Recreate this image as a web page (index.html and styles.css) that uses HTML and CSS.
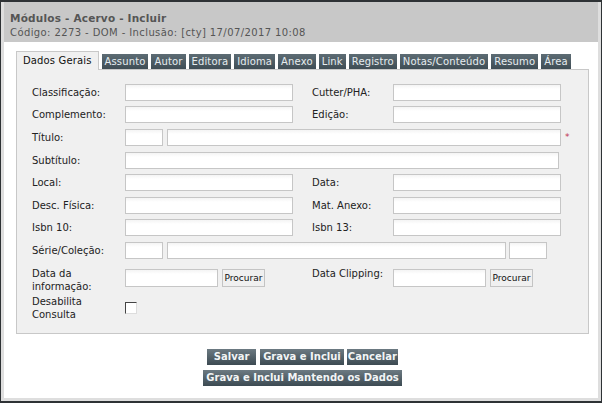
FILE: index.html
```html
<!DOCTYPE html>
<html lang="pt">
<head>
<meta charset="utf-8">
<title>Módulos - Acervo - Incluir</title>
<link rel="stylesheet" href="styles.css">
</head>
<body>
<div class="frame">
  <div class="window">
    <div class="header">
      <div class="title">Módulos - Acervo - Incluir</div>
      <div class="subtitle">Código: 2273 - DOM - Inclusão: [cty] 17/07/2017 10:08</div>
    </div>
    <div class="content">
      <div class="tabs">
        <span class="tab active">Dados Gerais</span>
        <span class="tab">Assunto</span>
        <span class="tab">Autor</span>
        <span class="tab">Editora</span>
        <span class="tab">Idioma</span>
        <span class="tab">Anexo</span>
        <span class="tab">Link</span>
        <span class="tab">Registro</span>
        <span class="tab">Notas/Conteúdo</span>
        <span class="tab">Resumo</span>
        <span class="tab">Área</span>
      </div>
      <div class="panel">
        <div class="row">
          <label class="lbl">Classificação:</label><input class="in half" type="text">
          <label class="lbl rlbl">Cutter/PHA:</label><input class="in rhalf" type="text">
        </div>
        <div class="row">
          <label class="lbl">Complemento:</label><input class="in half" type="text">
          <label class="lbl rlbl">Edição:</label><input class="in rhalf" type="text">
        </div>
        <div class="row">
          <label class="lbl">Título:</label><input class="in small" type="text"><input class="in title-in" type="text"><span class="req">*</span>
        </div>
        <div class="row">
          <label class="lbl">Subtítulo:</label><input class="in full" type="text">
        </div>
        <div class="row">
          <label class="lbl">Local:</label><input class="in half" type="text">
          <label class="lbl rlbl">Data:</label><input class="in rhalf" type="text">
        </div>
        <div class="row">
          <label class="lbl">Desc. Física:</label><input class="in half" type="text">
          <label class="lbl rlbl">Mat. Anexo:</label><input class="in rhalf" type="text">
        </div>
        <div class="row">
          <label class="lbl">Isbn 10:</label><input class="in half" type="text">
          <label class="lbl rlbl">Isbn 13:</label><input class="in rhalf" type="text">
        </div>
        <div class="row">
          <label class="lbl">Série/Coleção:</label><input class="in small" type="text"><input class="in serie" type="text"><input class="in small2" type="text">
        </div>
        <div class="row row-top">
          <label class="lbl two">Data da<br>informação:</label><input class="in date" type="text"><button class="find">Procurar</button>
          <label class="lbl rlbl two clip">Data Clipping:</label><input class="in date" type="text"><button class="find">Procurar</button>
        </div>
        <div class="row row-check">
          <label class="lbl two">Desabilita<br>Consulta</label><span class="check"></span>
        </div>
      </div>
      <div class="actions">
        <div class="btnrow">
          <button class="btn btn-save">Salvar</button>
          <button class="btn">Grava e Inclui</button>
          <button class="btn btn-cancel">Cancelar</button>
        </div>
        <div class="btnrow">
          <button class="btn">Grava e Inclui Mantendo os Dados</button>
        </div>
      </div>
    </div>
  </div>
</div>
</body>
</html>
```

FILE: styles.css
```css
html, body {
  margin: 0;
  padding: 0;
}
body {
  width: 602px;
  height: 403px;
  background: #2e3235;
  font-family: "DejaVu Sans", Verdana, sans-serif;
  font-size: 10px;
  color: #222;
  overflow: hidden;
}
.frame {
  box-sizing: border-box;
  width: 602px;
  height: 403px;
  padding: 2px 1px 2px 1px;
}
.window {
  box-sizing: border-box;
  height: 399px;
  background: #fff;
  border-left: 3px solid #dedede;
  border-right: 3px solid #dedede;
  border-bottom: 3px solid #dedede;
  display: flex;
  flex-direction: column;
}
.header {
  background: #c8c8c8;
  height: 40px;
  padding: 9px 0 0 6px;
  box-sizing: border-box;
  color: #555;
}
.title {
  font-weight: bold;
  font-size: 10.5px;
  line-height: 14px;
  letter-spacing: 0.2px;
}
.subtitle {
  font-size: 10px;
  line-height: 16px;
  letter-spacing: 0.4px;
}
.content {
  padding: 9px 0 0 12px;
}
.tabs {
  display: flex;
  align-items: flex-end;
  gap: 3px;
  height: 18px;
}
.tab {
  box-sizing: border-box;
  height: 15px;
  line-height: 15px;
  padding: 0 3px;
  color: #e6ecef;
  background: linear-gradient(#5d6c74, #3f4d55);
  font-size: 10px;
  letter-spacing: 0.14px;
}
.tab.active {
  height: 19px;
  line-height: 18px;
  background: #f0f0f0;
  color: #111;
  padding: 0 6px;
  border: 1px solid #c8c8c8;
  border-bottom: none;
  margin-bottom: -1px;
  position: relative;
  z-index: 1;
}
.panel {
  box-sizing: border-box;
  width: 573px;
  height: 265px;
  background: #f0f0f0;
  border: 1px solid #c8c8c8;
  padding: 11px 0 0 15px;
}
.row {
  display: flex;
  align-items: center;
  height: 22.6px;
}
.lbl {
  width: 93px;
  flex: none;
  color: #222;
}
.rlbl {
  width: 81px;
  margin-left: 19px;
}
.in {
  box-sizing: border-box;
  height: 17px;
  border: 1px solid #c6c6c6;
  background: linear-gradient(#f4f4f4, #fff 4px);
  margin: 0;
  padding: 0;
  flex: none;
}
.half { width: 168px; }
.rhalf { width: 168px; }
.small { width: 38px; }
.title-in { width: 394px; margin-left: 4px; }
.full { width: 434px; }
.serie { width: 339px; margin-left: 4px; }
.small2 { width: 38px; margin-left: 3px; }
.req {
  color: #c03050;
  font-size: 9px;
  margin-left: 4px;
}
.row-top {
  align-items: flex-start;
  height: 26px;
  margin-top: 5px;
}
.two {
  line-height: 13px;
  margin-top: 0;
}
.row-top .in, .row-top .find { margin-top: 2px; }
.row-top .in.date { height: 18px; width: 93px; }
.clip { margin-left: 47px; width: 81px; }
.find {
  box-sizing: border-box;
  height: 18px;
  width: 43px;
  margin-left: 4px;
  padding: 0;
  background: #f0f0f0;
  border: 1px solid #c4c4c4;
  font-family: "DejaVu Sans", Verdana, sans-serif;
  font-size: 9px;
  color: #111;
  flex: none;
}
.row-check {
  height: 30px;
  align-items: center;
}
.check {
  display: block;
  box-sizing: border-box;
  width: 12px;
  height: 12px;
  background: #fff;
  border-top: 1px solid #444;
  border-left: 1px solid #444;
  border-right: 1px solid #ddd;
  border-bottom: 1px solid #ddd;
}
.actions {
  width: 573px;
  padding-top: 15px;
  display: flex;
  flex-direction: column;
  align-items: center;
  gap: 5px;
}
.btnrow {
  display: flex;
  gap: 3px;
}
.btn {
  height: 16px;
  padding: 0 3px;
  border: none;
  background: linear-gradient(#6c7a82, #3c4a52);
  color: #f2f5f6;
  font-family: "DejaVu Sans", Verdana, sans-serif;
  font-weight: bold;
  font-size: 10px;
  line-height: 16px;
}
.btn-save { width: 49px; margin-right: 1px; }
.btn-cancel { padding: 0 1px; }
```
